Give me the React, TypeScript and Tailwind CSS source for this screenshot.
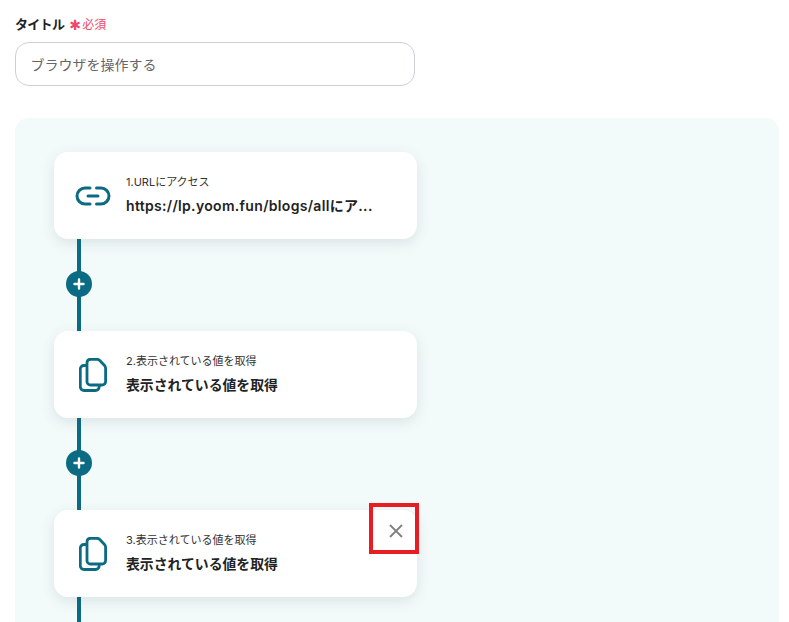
const font = { fontFamily: 'Inter, "Noto Sans CJK JP", sans-serif' }

function LinkIcon() {
  return (
    <svg width="36" height="22" viewBox="0 0 36 22" fill="none" stroke="#0b6b83" strokeWidth="3" strokeLinecap="round">
      <path d="M15 3H10a8 8 0 0 0 0 16h5" />
      <path d="M21.500 3H26a8 8 0 0 1 0 16h-4.500" />
      <path d="M13 11h10" />
    </svg>
  )
}

function CopyIcon() {
  return (
    <svg width="28" height="34" viewBox="0 0 28 34" fill="none" stroke="#0b6b83" strokeWidth="2.800" strokeLinejoin="round">
      <path d="M8 4.500a3.500 3.500 0 0 1 3.500-3.200h6.500a4 4 0 0 1 2.800 1.200l4.700 5a4 4 0 0 1 1.100 2.700v13.300a3.500 3.500 0 0 1-3.500 3.500H11.500A3.500 3.500 0 0 1 8 23z" />
      <path d="M8 7.500H5A3.700 3.700 0 0 0 1.300 11.200v17.600A3.700 3.700 0 0 0 5 32.500h11.500a3.700 3.700 0 0 0 3.700-3.700v-2.300" />
    </svg>
  )
}

function Connector() {
  return (
    <div className="h-[92px] ml-[23px] w-1 bg-[#0b6b83] flex items-center justify-center">
      <div className="w-[26px] h-[26px] shrink-0 rounded-full bg-[#0b6b83] flex items-center justify-center -mt-[2px]">
        <svg width="12" height="12" viewBox="0 0 12 12" stroke="#fff" strokeWidth="2.400" strokeLinecap="round">
          <path d="M6 1.500v9M1.500 6h9" />
        </svg>
      </div>
    </div>
  )
}

function StepCard({ icon, label, title, url }: { icon: React.ReactNode; label: string; title: string; url?: boolean }) {
  return (
    <div className="w-[363px] h-[87px] bg-white rounded-[14px] shadow-[0_4px_14px_rgba(40,70,80,0.12)] flex items-center">
      <div className="w-[72px] flex justify-center shrink-0 pl-[5px]">{icon}</div>
      <div className="flex flex-col pb-[2px]">
        <div className="text-[11px] leading-[16px] text-[#333]">{label}</div>
        <div
          className={
            url
              ? 'mt-[6px] text-[14px] leading-[20px] font-semibold text-[#222] tracking-[0.32px]'
              : 'mt-[6px] text-[13.850px] leading-[20px] font-semibold text-[#222]'
          }
        >
          {title}
        </div>
      </div>
    </div>
  )
}

export default function App() {
  return (
    <div className="relative w-[789px] h-[622px] overflow-hidden bg-white" style={font}>
      <div className="pl-[15px] pt-[15px]">
        <div className="flex items-center h-[18px] pt-[2px]">
          <span className="text-[13px] font-semibold text-[#222] tracking-[-0.7px]">タイトル</span>
          <span className="ml-[5px] w-[10px] text-[14px] text-[#f0476b] leading-none font-['DejaVu_Sans']">✱</span>
          <span className="ml-[3px] text-[12px] text-[#f0476b]">必須</span>
        </div>
        <div className="mt-[9px] w-[400px] h-[44px] rounded-[14px] border border-[#cdd0da] flex items-center pl-[14.500px] text-[14px] text-[#666]">
          ブラウザを操作する
        </div>
      </div>

      <div className="mt-[32px] ml-[15px] w-[764px] h-[520px] bg-[#f3fafa] rounded-t-[14px] pt-[34px] pl-[39px]">
        <StepCard icon={<LinkIcon />} label="1.URLにアクセス" title="https://lp.yoom.fun/blogs/allにア..." url />
        <Connector />
        <StepCard icon={<CopyIcon />} label="2.表示されている値を取得" title="表示されている値を取得" />
        <Connector />
        <div className="relative w-[363px]">
          <StepCard icon={<CopyIcon />} label="3.表示されている値を取得" title="表示されている値を取得" />
          <div className="absolute -top-[7px] -right-[2px] w-[50px] h-[51px] border-4 border-[#e81c23] flex items-center justify-center pl-[4px] pt-[5px]">
            <svg width="14" height="14" viewBox="0 0 14 14" stroke="#808080" strokeWidth="1.800">
              <path d="M1 1l12 12M13 1L1 13" />
            </svg>
          </div>
        </div>
        <div className="h-[30px] ml-[23px] w-1 bg-[#0b6b83]" />
      </div>
    </div>
  )
}
